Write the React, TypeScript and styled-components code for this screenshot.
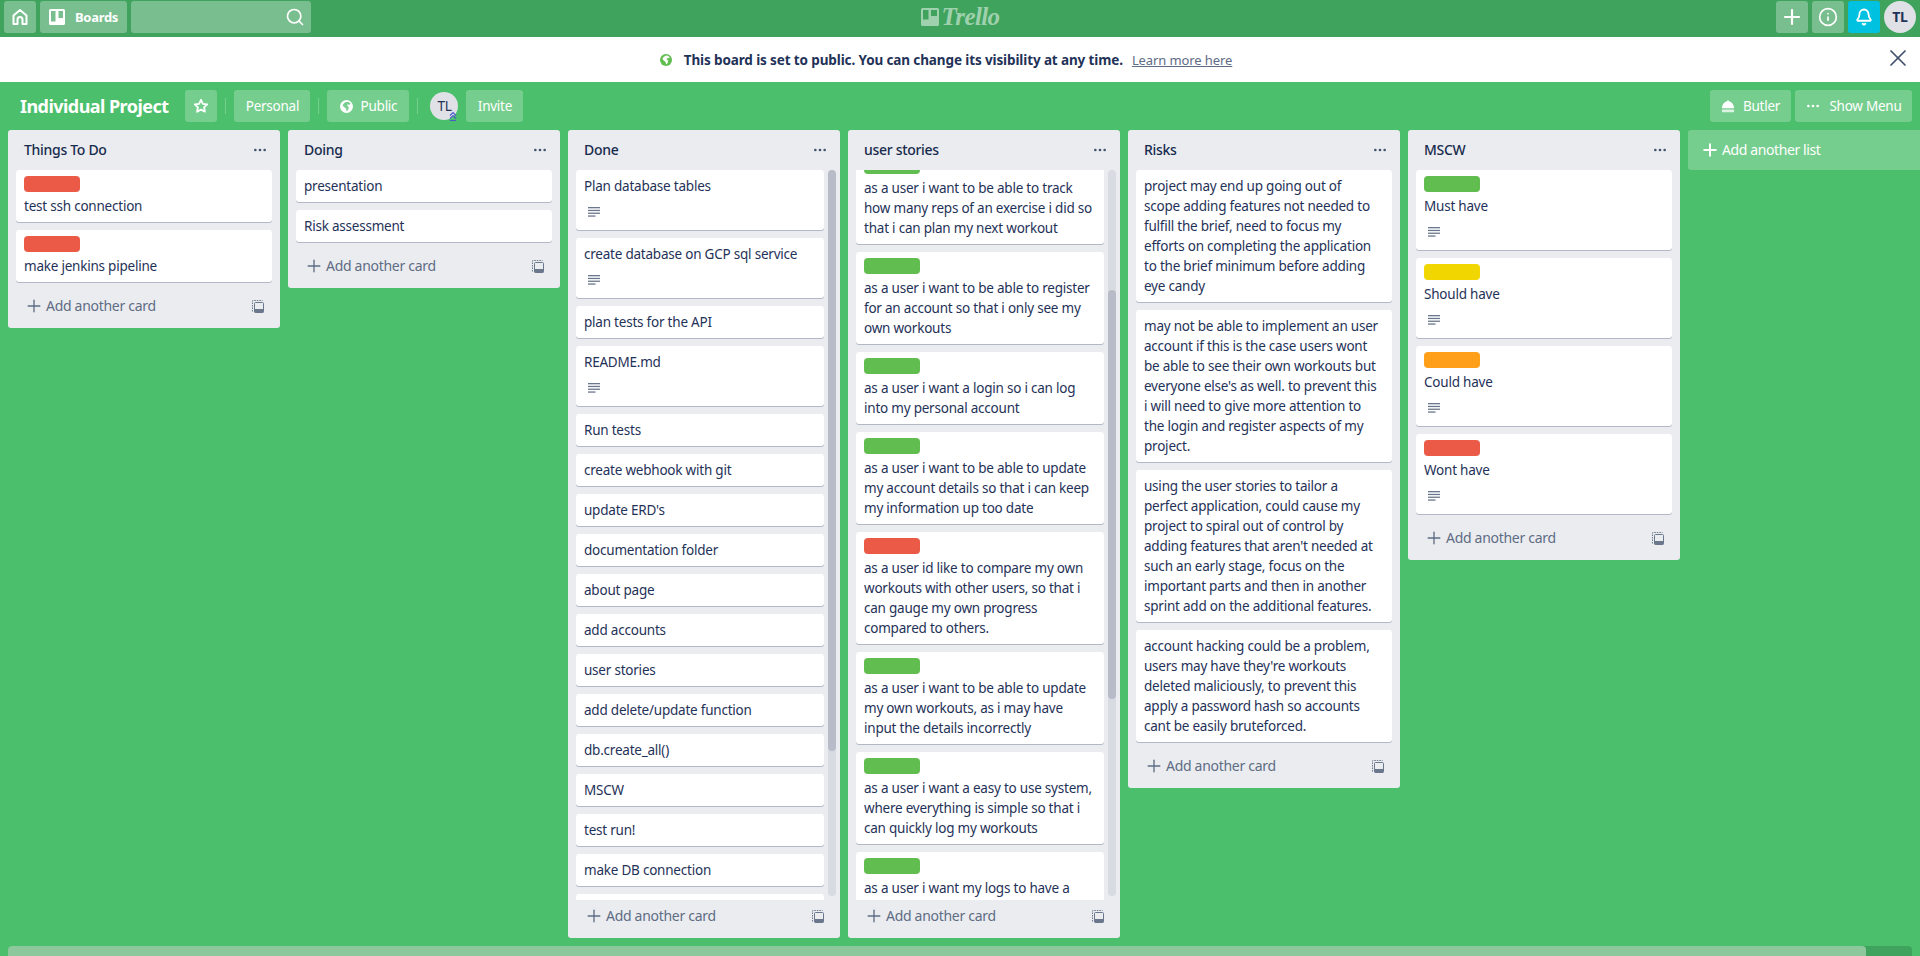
import React from 'react';
import styled, {createGlobalStyle} from "styled-components";
import {Bell, Ellipsis, Info, Plus, Search, X} from "lucide-react";

const font = '"Noto Sans", "Open Sans", sans-serif';
const textColor = '#1f3258';

const labelColors = {
    green: '#61bd4f',
    yellow: '#f2d600',
    orange: '#ff9f1a',
    red: '#eb5a46',
};

type LabelColor = keyof typeof labelColors;

type CardData = {
    text: string,
    label?: LabelColor,
    description?: boolean,
};

type ListData = {
    title: string,
    cards: CardData[],
    // the two long lists are scrolled, so they get a scrollbar
    scroll?: {thumbTop: number, thumbHeight: number, offset: number},
};

const lists: ListData[] = [
    {
        title: 'Things To Do',
        cards: [
            {text: 'test ssh connection', label: 'red'},
            {text: 'make jenkins pipeline', label: 'red'},
        ],
    },
    {
        title: 'Doing',
        cards: [
            {text: 'presentation'},
            {text: 'Risk assessment'},
        ],
    },
    {
        title: 'Done',
        scroll: {thumbTop: 0, thumbHeight: 581, offset: 0},
        cards: [
            {text: 'Plan database tables', description: true},
            {text: 'create database on GCP sql service', description: true},
            {text: 'plan tests for the API'},
            {text: 'README.md', description: true},
            {text: 'Run tests'},
            {text: 'create webhook with git'},
            {text: "update ERD's"},
            {text: 'documentation folder'},
            {text: 'about page'},
            {text: 'add accounts'},
            {text: 'user stories'},
            {text: 'add delete/update function'},
            {text: 'db.create_all()'},
            {text: 'MSCW'},
            {text: 'test run!'},
            {text: 'make DB connection'},
            {text: ''},
        ],
    },
    {
        title: 'user stories',
        scroll: {thumbTop: 120, thumbHeight: 409, offset: -18},
        cards: [
            {text: 'as a user i want to be able to track how many reps of an exercise i did so that i can plan my next workout', label: 'green'},
            {text: 'as a user i want to be able to register for an account so that i only see my own workouts', label: 'green'},
            {text: 'as a user i want a login so i can log into my personal account', label: 'green'},
            {text: 'as a user i want to be able to update my account details so that i can keep my information up too date', label: 'green'},
            {text: 'as a user id like to compare my own workouts with other users, so that i can gauge my own progress compared to others.', label: 'red'},
            {text: 'as a user i want to be able to update my own workouts, as i may have input the details incorrectly', label: 'green'},
            {text: 'as a user i want a easy to use system, where everything is simple so that i can quickly log my workouts', label: 'green'},
            {text: 'as a user i want my logs to have a', label: 'green'},
        ],
    },
    {
        title: 'Risks',
        cards: [
            {text: 'project may end up going out of\nscope adding features not needed to fulfill the brief, need to focus my efforts on completing the application to the brief minimum before adding\neye candy'},
            {text: "may not be able to implement an user account if this is the case users wont be able to see their own workouts but everyone else's as well. to prevent this\ni will need to give more attention to the login and register aspects of my\nproject."},
            {text: "using the user stories to tailor a perfect application, could cause my project to spiral out of control by adding features that aren't needed at such an early stage, focus on the important parts and then in another sprint add on the additional features."},
            {text: "account hacking could be a problem, users may have they're workouts deleted maliciously, to prevent this apply a password hash so accounts cant be easily bruteforced."},
        ],
    },
    {
        title: 'MSCW',
        cards: [
            {text: 'Must have', label: 'green', description: true},
            {text: 'Should have', label: 'yellow', description: true},
            {text: 'Could have', label: 'orange', description: true},
            {text: 'Wont have', label: 'red', description: true},
        ],
    },
];

const HomeIcon = () => (
    <svg width="18" height="18" viewBox="0 0 18 18" fill="none" stroke="#fff" strokeWidth="2" strokeLinejoin="round">
        <path d="M2.5 16V7.5L9 2l6.5 5.5V16h-4v-4.5a2.5 2.5 0 0 0-5 0V16z"/>
    </svg>
);

const BoardsIcon = () => (
    <svg width="16" height="16" viewBox="0 0 16 16">
        <path fillRule="evenodd" fill="#fff" d="M1.500 0h13A1.500 1.500 0 0 1 16 1.500v13a1.500 1.500 0 0 1-1.500 1.500h-13A1.500 1.500 0 0 1 0 14.500v-13A1.500 1.500 0 0 1 1.500 0zM2 2v10.500h4.500V2zm7.500 0v7H14V2z"/>
    </svg>
);

const LogoIcon = () => (
    <svg width="18" height="18" viewBox="0 0 18 18">
        <path fillRule="evenodd" fill="currentColor" d="M1.500 0h15A1.500 1.500 0 0 1 18 1.500v15a1.500 1.500 0 0 1-1.500 1.500h-15A1.500 1.500 0 0 1 0 16.500v-15A1.500 1.500 0 0 1 1.500 0zM2 2v9.500h5.500V2zm8 0v6h6V2z"/>
    </svg>
);

const StarIcon = () => (
    <svg width="16" height="16" viewBox="0 0 16 16" fill="none" stroke="#fff" strokeWidth="1.800" strokeLinejoin="round">
        <path d="M8 1.800l1.900 4 4.300.6-3.100 3 .8 4.300L8 11.600l-3.900 2.100.8-4.300-3.100-3 4.300-.6z"/>
    </svg>
);

const GlobeIcon = ({color, land, size}: {color: string, land: string, size: number}) => (
    <svg width={size} height={size} viewBox="0 0 16 16">
        <circle cx="8" cy="8" r="8" fill={color}/>
        <path fill={land} d="M8.500 2c2 .2 3.500 1 4.600 2.500l-1.600 1.300-2.300-.3-.4 1.600 2 1.600-.6 3.300-1.900 1.900-.9-3.300L5 8.600 3.200 6.800C4 4.200 6 2.400 8.500 2z"/>
    </svg>
);

const ButlerIcon = () => (
    <svg width="14" height="14" viewBox="0 0 16 16" fill="#fff">
        <path d="M8 .8l1 1.700C12.400 3.200 14.600 6 15 10.500H1c.4-4.500 2.600-7.300 6-8z"/>
        <rect x="1" y="12" width="14" height="3" rx="1" fillOpacity="0.75"/>
    </svg>
);

const DescriptionIcon = () => (
    <svg width="12" height="10" viewBox="0 0 12 10" fill="#6b778c">
        <rect x="0" y="0" width="12" height="1.300"/>
        <rect x="0" y="2.800" width="12" height="1.300"/>
        <rect x="0" y="5.600" width="12" height="1.300"/>
        <rect x="0" y="8.400" width="7.500" height="1.300"/>
    </svg>
);

const TemplateIcon = () => (
    <svg width="12" height="13" viewBox="0 0 12 13" fill="none" stroke="#6b778c">
        <path d="M.5 11.500v-10.500a.5.5 0 0 1 .5-.5h9.500" strokeDasharray="1.500 1"/>
        <rect x="2.500" y="2.500" width="9" height="10" rx="1"/>
        <rect x="2.500" y="9" width="9" height="3.500" fill="#6b778c" stroke="none"/>
    </svg>
);

const ChevronsBadge = () => (
    <svg width="10" height="10" viewBox="0 0 10 10" fill="none" stroke="#4a5ac9" strokeWidth="1.100">
        <path d="M2 4.500l3-3 3 3M2 7.500l3-3 3 3"/>
        <path d="M2 9.500h6"/>
    </svg>
);

const Card = ({text, label, description}: CardData) => (
    <StyledCard>
        {label && <Label $color={labelColors[label]}/>}
        <CardTitle>{text}</CardTitle>
        {description && <Badges><DescriptionIcon/></Badges>}
    </StyledCard>
);

const List = ({title, cards, scroll}: ListData) => (
    <StyledList>
        <ListHeader>
            <ListTitle>{title}</ListTitle>
            <Ellipsis size={16} color="#42526e"/>
        </ListHeader>
        <ListBody $scrolled={!!scroll}>
            <Cards $offset={scroll ? scroll.offset : 0}>
                {cards.map((card, i) => <Card key={i} {...card}/>)}
            </Cards>
            {scroll && (
                <ScrollTrack>
                    <ScrollThumb $top={scroll.thumbTop} $height={scroll.thumbHeight}/>
                </ScrollTrack>
            )}
        </ListBody>
        <ListFooter>
            <AddCard><Plus size={20} strokeWidth={1.6}/>Add another card</AddCard>
            <TemplateIcon/>
        </ListFooter>
    </StyledList>
);

export default function App() {
    return (
        <Page>
            <GlobalStyle/>
            <Header>
                <HeaderLeft>
                    <HeaderButton><HomeIcon/></HeaderButton>
                    <BoardsButton><BoardsIcon/>Boards</BoardsButton>
                    <SearchBox><Search size={20} color="#fff" strokeWidth={2}/></SearchBox>
                </HeaderLeft>
                <Logo><LogoIcon/><LogoText>Trello</LogoText></Logo>
                <HeaderRight>
                    <HeaderButton><Plus size={24} color="#fff" strokeWidth={2.2}/></HeaderButton>
                    <HeaderButton><Info size={20} color="#fff" strokeWidth={2}/></HeaderButton>
                    <BellButton><Bell size={18} color="#fff" strokeWidth={2.4}/></BellButton>
                    <HeaderAvatar>TL</HeaderAvatar>
                </HeaderRight>
            </Header>
            <Banner>
                <BannerMessage>
                    <GlobeIcon color="#61bd4f" land="#fff" size={12}/>
                    <BannerText>This board is set to public. You can change its visibility at any time.</BannerText>
                    <BannerLink>Learn more here</BannerLink>
                </BannerMessage>
                <BannerClose><X size={28} color="#42526e" strokeWidth={1.5}/></BannerClose>
            </Banner>
            <Board>
                <BoardHeader>
                    <BoardTitle>Individual Project</BoardTitle>
                    <BoardButton $width={32}><StarIcon/></BoardButton>
                    <Divider/>
                    <BoardButton $width={76}>Personal</BoardButton>
                    <Divider/>
                    <BoardButton $width={82}><GlobeIcon color="#fff" land="#78cf90" size={13}/>Public</BoardButton>
                    <Divider/>
                    <MemberAvatar>TL<AvatarBadge><ChevronsBadge/></AvatarBadge></MemberAvatar>
                    <BoardButton $width={57}>Invite</BoardButton>
                    <BoardHeaderRight>
                        <BoardButton $width={81}><ButlerIcon/>Butler</BoardButton>
                        <BoardButton $width={117}><Ellipsis size={16} color="#fff"/>Show Menu</BoardButton>
                    </BoardHeaderRight>
                </BoardHeader>
                <Canvas>
                    {lists.map(list => <List key={list.title} {...list}/>)}
                    <AddList><Plus size={20} color="#fff" strokeWidth={2.4}/>Add another list</AddList>
                </Canvas>
                <BoardScrollbar><BoardScrollThumb/></BoardScrollbar>
            </Board>
        </Page>
    );
}

const GlobalStyle = createGlobalStyle`
    html, body {
        margin: 0;
        height: 100%;
        overflow: hidden;
    }
    body {
        font-family: ${font};
        font-size: 13.5px;
        line-height: 20px;
        color: ${textColor};
    }
`
const Page = styled.div`
    display: flex;
    flex-direction: column;
    height: 956px;
`
const Header = styled.header`
    flex: none;
    display: grid;
    grid-template-columns: 1fr auto 1fr;
    align-items: start;
    height: 37px;
    padding: 1px 4px 0;
    box-sizing: border-box;
    background-color: #3fa35d;
`
const HeaderLeft = styled.div`
    display: flex;
    gap: 4px;
`
const HeaderRight = styled.div`
    display: flex;
    gap: 4px;
    justify-self: end;
`
const HeaderButton = styled.div`
    display: flex;
    align-items: center;
    justify-content: center;
    width: 32px;
    height: 32px;
    border-radius: 3px;
    background-color: rgba(255, 255, 255, 0.3);
`
const BoardsButton = styled(HeaderButton)`
    width: 87px;
    gap: 10px;
    color: #fff;
    font-size: 13px;
    font-weight: 700;
    letter-spacing: -0.3px;
`
const SearchBox = styled(HeaderButton)`
    width: 180px;
    justify-content: flex-end;
    padding-right: 6px;
    box-sizing: border-box;
`
const Logo = styled.div`
    display: flex;
    align-items: center;
    gap: 3px;
    height: 31px;
    color: rgba(255, 255, 255, 0.5);
`
const LogoText = styled.span`
    font-family: "Liberation Serif", serif;
    font-style: italic;
    font-weight: 700;
    font-size: 25px;
    letter-spacing: -0.6px;
`
const BellButton = styled(HeaderButton)`
    background-color: #00c2e0;
`
const HeaderAvatar = styled.div`
    display: flex;
    align-items: center;
    justify-content: center;
    width: 32px;
    height: 32px;
    border-radius: 50%;
    background-color: #dfe1e6;
    font-size: 14px;
    font-weight: 700;
    letter-spacing: -0.3px;
`
const Banner = styled.div`
    flex: none;
    display: grid;
    grid-template-columns: 1fr auto 1fr;
    align-items: center;
    height: 45px;
    padding-right: 28px;
    background-color: #fff;
`
const BannerMessage = styled.div`
    grid-column: 2;
    display: flex;
    align-items: center;
`
const BannerText = styled.span`
    margin: 0 9px 0 12px;
    font-weight: 700;
    letter-spacing: -0.12px;
`
const BannerLink = styled.span`
    color: #5e6c84;
    font-size: 13px;
    letter-spacing: -0.1px;
    text-decoration: underline;
`
const BannerClose = styled.div`
    display: flex;
    justify-self: end;
    margin: -3px -20px 0 0;
`
const Board = styled.main`
    flex: 1;
    min-height: 0;
    display: flex;
    flex-direction: column;
    background-color: #4bbf6b;
`
const BoardHeader = styled.div`
    flex: none;
    display: flex;
    align-items: center;
    gap: 8px;
    height: 32px;
    padding: 8px 8px 8px 20px;
`
const BoardTitle = styled.h1`
    margin: 0 9px 0 0;
    color: #fff;
    font-size: 18px;
    font-weight: 700;
    letter-spacing: -0.55px;
    line-height: 32px;
`
const BoardButton = styled.div<{$width: number}>`
    display: flex;
    align-items: center;
    justify-content: center;
    gap: 8px;
    width: ${props => props.$width}px;
    height: 32px;
    border-radius: 3px;
    background-color: rgba(255, 255, 255, 0.24);
    color: #fff;
    letter-spacing: -0.25px;
`
const Divider = styled.span`
    width: 1px;
    height: 16px;
    background-color: rgba(255, 255, 255, 0.24);
`
const MemberAvatar = styled.div`
    position: relative;
    display: flex;
    align-items: center;
    justify-content: center;
    width: 28px;
    height: 28px;
    margin-left: 4px;
    border-radius: 50%;
    background-color: #dfe1e6;
    letter-spacing: -0.3px;
`
const AvatarBadge = styled.span`
    position: absolute;
    right: 0;
    bottom: -1px;
    display: flex;
`
const BoardHeaderRight = styled.div`
    display: flex;
    gap: 4px;
    margin-left: auto;
`
const Canvas = styled.div`
    flex: 1;
    min-height: 0;
    display: flex;
    align-items: flex-start;
    gap: 8px;
    padding: 0 0 8px 8px;
    overflow: hidden;
`
const StyledList = styled.section`
    flex: none;
    display: flex;
    flex-direction: column;
    width: 272px;
    max-height: 100%;
    border-radius: 3px;
    background-color: #ebecf0;
`
const ListHeader = styled.div`
    flex: none;
    display: flex;
    align-items: center;
    justify-content: space-between;
    height: 40px;
    padding: 0 12px 0 16px;
`
const ListTitle = styled.h2`
    margin: 0;
    font-size: 14px;
    font-weight: 500;
    letter-spacing: -0.3px;
    color: #172b4d;
`
const ListBody = styled.div<{$scrolled: boolean}>`
    flex: 1;
    min-height: 0;
    display: flex;
    gap: 4px;
    padding: ${props => props.$scrolled ? '0 4px 0 8px' : '0 8px'};
`
const Cards = styled.div<{$offset: number}>`
    flex: 1;
    min-width: 0;
    overflow: hidden;

    & > :first-child {
        margin-top: ${props => props.$offset}px;
    }
`
const StyledCard = styled.article`
    margin-bottom: 8px;
    padding: 6px 8px 2px;
    border-radius: 3px;
    background-color: #fff;
    box-shadow: 0 1px 0 rgba(9, 30, 66, 0.25);
`
const Label = styled.div<{$color: string}>`
    width: 56px;
    height: 16px;
    margin-bottom: 4px;
    border-radius: 4px;
    background-color: ${props => props.$color};
`
const CardTitle = styled.p`
    margin: 0 0 4px;
    min-height: 20px;
    letter-spacing: -0.22px;
    white-space: pre-line;
`
const Badges = styled.div`
    display: flex;
    align-items: center;
    height: 28px;
    padding: 0 0 4px 4px;
    box-sizing: border-box;
`
const ScrollTrack = styled.div`
    flex: none;
    width: 8px;
    margin-bottom: 4px;
    border-radius: 4px;
    background-color: rgba(9, 30, 66, 0.08);
`
const ScrollThumb = styled.div<{$top: number, $height: number}>`
    width: 8px;
    height: ${props => props.$height}px;
    margin-top: ${props => props.$top}px;
    border-radius: 4px;
    background-color: rgba(9, 30, 66, 0.16);
`
const ListFooter = styled.div`
    flex: none;
    display: flex;
    align-items: center;
    justify-content: space-between;
    height: 32px;
    margin-bottom: 6px;
    padding: 0 16px;
`
const AddCard = styled.div`
    display: flex;
    align-items: center;
    gap: 2px;
    color: #5e6c84;
    font-size: 14px;
    letter-spacing: -0.3px;
`
const AddList = styled.div`
    flex: none;
    display: flex;
    align-items: center;
    gap: 2px;
    width: 272px;
    height: 40px;
    padding-left: 12px;
    box-sizing: border-box;
    border-radius: 3px;
    background-color: rgba(255, 255, 255, 0.24);
    color: #fff;
    font-size: 14px;
    letter-spacing: -0.4px;
`
const BoardScrollbar = styled.div`
    flex: none;
    height: 10px;
    margin: 0 8px;
    border-radius: 4px 4px 0 0;
    background-color: #3fa35d;
`
const BoardScrollThumb = styled.div`
    width: 1858px;
    height: 10px;
    border-radius: 4px 4px 0 0;
    background-color: #8cc89c;
`
